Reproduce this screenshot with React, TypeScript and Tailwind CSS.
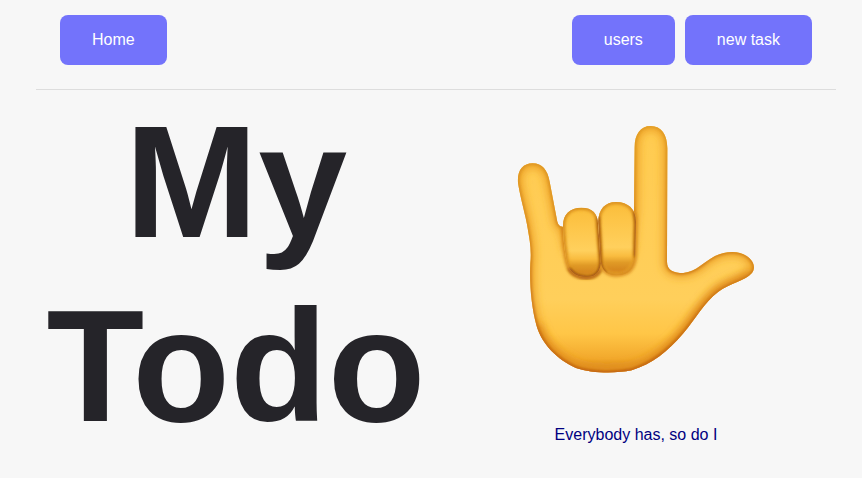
import type { ReactNode } from 'react';

const HAND =
  'M54 218C51 182 68 160 98 160C126 160 143 180 149 215L172 335Q176 350 188 350L205 420H390L402 300L404 112C404 72 422 48 452 48C484 48 502 74 502 115L501 455C501 481 522 489 550 489C592 484 610 456 645 438C680 422 716 422 740 438C762 453 768 474 755 490C737 512 690 520 655 545C612 577 588 625 550 670C502 726 456 762 395 781C345 791 275 790 228 774C172 748 126 705 109 645C94 590 88 520 91 460C95 420 89 390 83 355C77 315 62 270 54 218Z';
const RING =
  'M189 350C188 313 209 293 244 293C278 293 295 312 294 345L303 445C304 484 290 501 261 501C226 502 206 484 200 455C194 424 190 390 189 350Z';
const MIDDLE =
  'M295 340C293 299 315 276 348 276C384 276 408 297 408 335L406 440C403 477 384 495 350 495C317 495 303 479 301 445Z';

function HandIcon() {
  return (
    <svg viewBox="3 0 810 840" className="h-[280px] w-[270px]" role="img" aria-label="Love-you gesture">
      <defs>
        <linearGradient id="skin" gradientUnits="userSpaceOnUse" x1="330" y1="48" x2="330" y2="790">
          <stop offset="0" stopColor="#ffcb50" />
          <stop offset="0.7" stopColor="#ffcf5b" />
          <stop offset="0.84" stopColor="#ffc647" />
          <stop offset="0.94" stopColor="#f2a92c" />
          <stop offset="1" stopColor="#cf7a16" />
        </linearGradient>
        <linearGradient id="knuckle" x1="0" y1="0" x2="0" y2="1">
          <stop offset="0" stopColor="#fabd3a" />
          <stop offset="0.25" stopColor="#fdc548" />
          <stop offset="0.62" stopColor="#ffd05d" />
          <stop offset="0.74" stopColor="#f9bc3f" />
          <stop offset="0.83" stopColor="#e09a26" />
          <stop offset="1" stopColor="#cf7a18" />
        </linearGradient>
        <linearGradient id="rim" gradientUnits="userSpaceOnUse" x1="0" y1="48" x2="0" y2="790">
          <stop offset="0" stopColor="#dc9620" />
          <stop offset="0.45" stopColor="#d18119" />
          <stop offset="1" stopColor="#b9580c" />
        </linearGradient>
        <filter id="wide" x="-20%" y="-20%" width="140%" height="140%">
          <feGaussianBlur stdDeviation="12" />
        </filter>
        <filter id="fine" x="-20%" y="-20%" width="140%" height="140%">
          <feGaussianBlur stdDeviation="4" />
        </filter>
        <clipPath id="hand-clip"><path d={HAND} /></clipPath>
        <clipPath id="ring-clip"><path d={RING} /></clipPath>
        <clipPath id="middle-clip"><path d={MIDDLE} /></clipPath>
      </defs>

      <path d={HAND} fill="url(#skin)" />
      <g clipPath="url(#hand-clip)" fill="none">
        <path d={HAND} stroke="#eda128" strokeWidth="26" filter="url(#wide)" />
        <path d="M109 645C126 705 172 748 228 774C275 790 345 791 395 781C456 762 502 726 550 670C588 625 612 577 655 545C690 520 737 512 755 490" stroke="#e08c1a" strokeWidth="30" filter="url(#wide)" />
        <path d={HAND} stroke="url(#rim)" strokeWidth="9" filter="url(#fine)" />
        <path d={RING} stroke="#d98a1e" strokeWidth="12" filter="url(#fine)" />
        <path d={MIDDLE} stroke="#d98a1e" strokeWidth="10" filter="url(#fine)" />
        <path d="M205 475C215 496 235 504 262 504Q290 502 303 480" stroke="#a9540c" strokeWidth="7" filter="url(#fine)" />
        <path d="M406 290V440" stroke="#b5640f" strokeWidth="8" filter="url(#fine)" />
      </g>

      <path d={RING} fill="url(#knuckle)" />
      <g clipPath="url(#ring-clip)" fill="none">
        <path d={RING} stroke="#eba62c" strokeWidth="16" filter="url(#fine)" />
        <path d={RING} stroke="#c77a16" strokeWidth="5" filter="url(#fine)" />
        <path d="M295 320L303 450Q302 501 261 501Q226 501 208 475" stroke="#92450a" strokeWidth="8" filter="url(#fine)" />
      </g>

      <path d={MIDDLE} fill="url(#knuckle)" />
      <g clipPath="url(#middle-clip)" fill="none">
        <path d={MIDDLE} stroke="#eba62c" strokeWidth="16" filter="url(#fine)" />
        <path d={MIDDLE} stroke="#c77a16" strokeWidth="5" filter="url(#fine)" />
        <path d="M295 320L301 450Q303 480 318 488M404 305L408 340L406 440" stroke="#92450a" strokeWidth="7" filter="url(#fine)" />
      </g>
    </svg>
  );
}

function NavButton({ children }: { children: ReactNode }) {
  return (
    <button type="button" className="cursor-pointer rounded-lg bg-[#7373fb] px-8 py-4 leading-[18px] text-white">
      {children}
    </button>
  );
}

export default function App() {
  return (
    <div className="min-h-screen bg-[#f7f7f7] pr-[26px] pl-9 font-['Liberation_Sans',Arial,sans-serif] text-base text-[#252429]">
      <header className="border-b border-[#dddddd] px-6 pt-[15px] pb-6">
        <nav className="flex items-center justify-between">
          <NavButton>Home</NavButton>
          <div className="flex gap-[10px]">
            <NavButton>users</NavButton>
            <NavButton>new task</NavButton>
          </div>
        </nav>
      </header>
      <main className="grid grid-cols-2">
        <h1 className="text-center text-[160px] leading-[184px] font-bold">
          My
          <br />
          Todo
        </h1>
        <section className="flex flex-col items-center pt-5">
          <HandIcon />
          <p className="mt-9 leading-[18px] text-[#000080]">Everybody has, so do I</p>
        </section>
      </main>
    </div>
  );
}
